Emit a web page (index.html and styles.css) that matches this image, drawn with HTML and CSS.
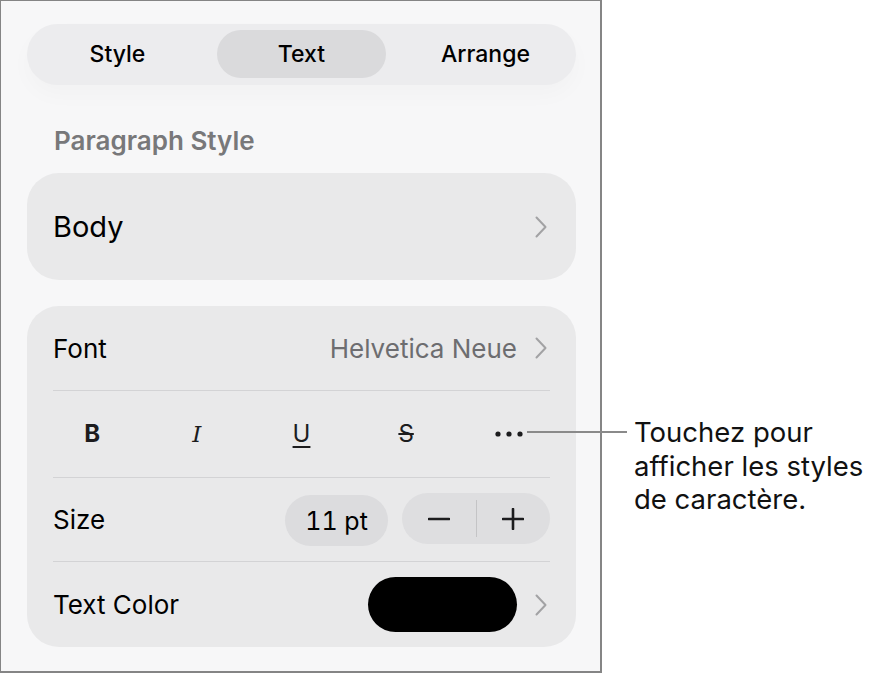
FILE: index.html
```html
<!DOCTYPE html>
<html lang="fr">
<head>
<meta charset="utf-8">
<title>Text Format</title>
<link rel="stylesheet" href="styles.css">
</head>
<body>
<div class="page">
  <div class="panel">
    <div class="tabs">
      <div class="tab">Style</div>
      <div class="tab active">Text</div>
      <div class="tab">Arrange</div>
    </div>
    <div class="section-label">Paragraph Style</div>
    <div class="card body-card">
      <span class="body-text">Body</span>
      <svg class="chev" width="12" height="22" viewBox="0 0 12 22"><path d="M1.5 1.5 L10.5 11 L1.5 20.5" fill="none" stroke="#a2a2a4" stroke-width="2" stroke-linecap="round" stroke-linejoin="round"/></svg>
    </div>
    <div class="card font-card">
      <div class="row font-row">
        <span class="label">Font</span>
        <span class="value">Helvetica Neue</span>
        <svg class="chev" width="12" height="22" viewBox="0 0 12 22"><path d="M1.5 1.5 L10.5 11 L1.5 20.5" fill="none" stroke="#a2a2a4" stroke-width="2" stroke-linecap="round" stroke-linejoin="round"/></svg>
      </div>
      <div class="divider"></div>
      <div class="styles-row">
        <span class="st st-b">B</span>
        <span class="st st-i">I</span>
        <span class="st st-u">U</span>
        <span class="st st-s">S</span>
        <span class="st st-more">
          <svg width="28" height="6" viewBox="0 0 28 6"><circle cx="3" cy="3" r="2.6" fill="#1c1c1e"/><circle cx="14" cy="3" r="2.6" fill="#1c1c1e"/><circle cx="25" cy="3" r="2.6" fill="#1c1c1e"/></svg>
        </span>
      </div>
      <div class="divider"></div>
      <div class="row size-row">
        <span class="label">Size</span>
        <span class="size-pill">11 pt</span>
        <div class="stepper">
          <span class="step">
            <svg width="22" height="22" viewBox="0 0 22 22"><path d="M1 11 H21" stroke="#1c1c1e" stroke-width="2.6" stroke-linecap="round"/></svg>
          </span>
          <span class="step-sep"></span>
          <span class="step">
            <svg width="22" height="22" viewBox="0 0 22 22"><path d="M1 11 H21 M11 1 V21" stroke="#1c1c1e" stroke-width="2.6" stroke-linecap="round"/></svg>
          </span>
        </div>
      </div>
      <div class="divider"></div>
      <div class="row color-row">
        <span class="label">Text Color</span>
        <span class="swatch"></span>
        <svg class="chev" width="12" height="22" viewBox="0 0 12 22"><path d="M1.5 1.5 L10.5 11 L1.5 20.5" fill="none" stroke="#a2a2a4" stroke-width="2" stroke-linecap="round" stroke-linejoin="round"/></svg>
      </div>
    </div>
  </div>
  <div class="callout">Touchez pour<br>afficher les styles<br>de caractère.</div>
  <div class="leader"></div>
</div>
</body>
</html>
```

FILE: styles.css
```css
* { box-sizing: border-box; }
html, body { margin: 0; padding: 0; background: #ffffff; }
body {
  font-family: Inter, "Noto Sans", "Liberation Sans", sans-serif;
  color: #000;
}
.page {
  position: relative;
  display: flex;
  align-items: flex-start;
  width: 878px;
  height: 673px;
}
.panel {
  width: 602px;
  height: 673px;
  flex: none;
  background: #f7f7f8;
  border-style: solid;
  border-color: #858585;
  border-width: 1px 2px 2px 1px;
  padding: 23px 24px 0 26px;
  display: flex;
  flex-direction: column;
}
.tabs {
  height: 61px;
  border-radius: 31px;
  background: #ececee;
  display: grid;
  grid-template-columns: repeat(3, 1fr);
  column-gap: 15px;
  padding: 6px 6px 7px;
  box-shadow: 0 10px 22px rgba(0, 0, 0, 0.025);
}
.tab {
  display: flex;
  align-items: center;
  justify-content: center;
  font-size: 23px;
  font-weight: 500;
  border-radius: 24px;
}
.tab.active { background: #dadadc; }
.section-label {
  margin-top: 41px;
  height: 30px;
  line-height: 30px;
  font-size: 26px;
  font-weight: 600;
  color: #78787a;
  padding-left: 27px;
}
.card {
  background: #e9e9ea;
  border-radius: 32px;
}
.body-card {
  margin-top: 17px;
  height: 107px;
  display: flex;
  align-items: center;
  justify-content: space-between;
  padding: 0 29px 0 26px;
}
.body-text { font-size: 29px; }
.chev { display: block; flex: none; }
.font-card {
  margin-top: 26px;
  padding: 0 29px 0 26px;
}
.row {
  display: flex;
  align-items: center;
  font-size: 26px;
}
.row .label { flex: 1; }
.font-row { height: 84px; }
.font-row .value { color: #6d6d70; margin-right: 18px; }
.divider { height: 1px; background: #d3d3d5; margin-right: -3px; }
.styles-row {
  height: 86px;
  margin: 0 -16px 0 -13px;
  display: grid;
  grid-template-columns: repeat(5, 1fr);
  align-items: center;
  justify-items: center;
  color: #1c1c1e;
}
.st { font-size: 24px; line-height: 1; }
.st-b { font-weight: 700; }
.st-i { font-family: "DejaVu Serif", "Liberation Serif", serif; font-style: italic; font-size: 23px; }
.st-u { text-decoration: underline; text-decoration-thickness: 2px; text-underline-offset: 4px; }
.st-s { text-decoration: line-through; text-decoration-thickness: 2px; }
.st-more svg { display: block; }
.st-more { margin-left: -4px; }
.size-row { height: 83px; margin-right: -3px; }
.size-pill {
  width: 103px;
  height: 51px;
  border-radius: 26px;
  background: #dcdcde;
  display: flex;
  align-items: center;
  justify-content: center;
  font-size: 25px;
  font-variant-numeric: tabular-nums;
  margin-right: 14px;
  margin-top: 2px;
}
.stepper {
  width: 148px;
  height: 51px;
  border-radius: 26px;
  background: #dedee0;
  display: flex;
  align-items: center;
  margin-top: -2px;
}
.step {
  flex: 1;
  display: flex;
  justify-content: center;
  align-items: center;
}
.step svg { display: block; }
.step-sep { width: 1px; height: 37px; background: #c4c4c6; }
.color-row { height: 85px; }
.swatch {
  width: 149px;
  height: 55px;
  border-radius: 28px;
  background: #000;
  margin-right: 18px;
}
.callout {
  margin-left: 32px;
  margin-top: 416px;
  font-size: 27.5px;
  line-height: 33.5px;
  color: #111;
}
.leader {
  position: absolute;
  left: 527px;
  top: 431px;
  width: 100px;
  height: 2px;
  background: #8a8a8a;
}
```
